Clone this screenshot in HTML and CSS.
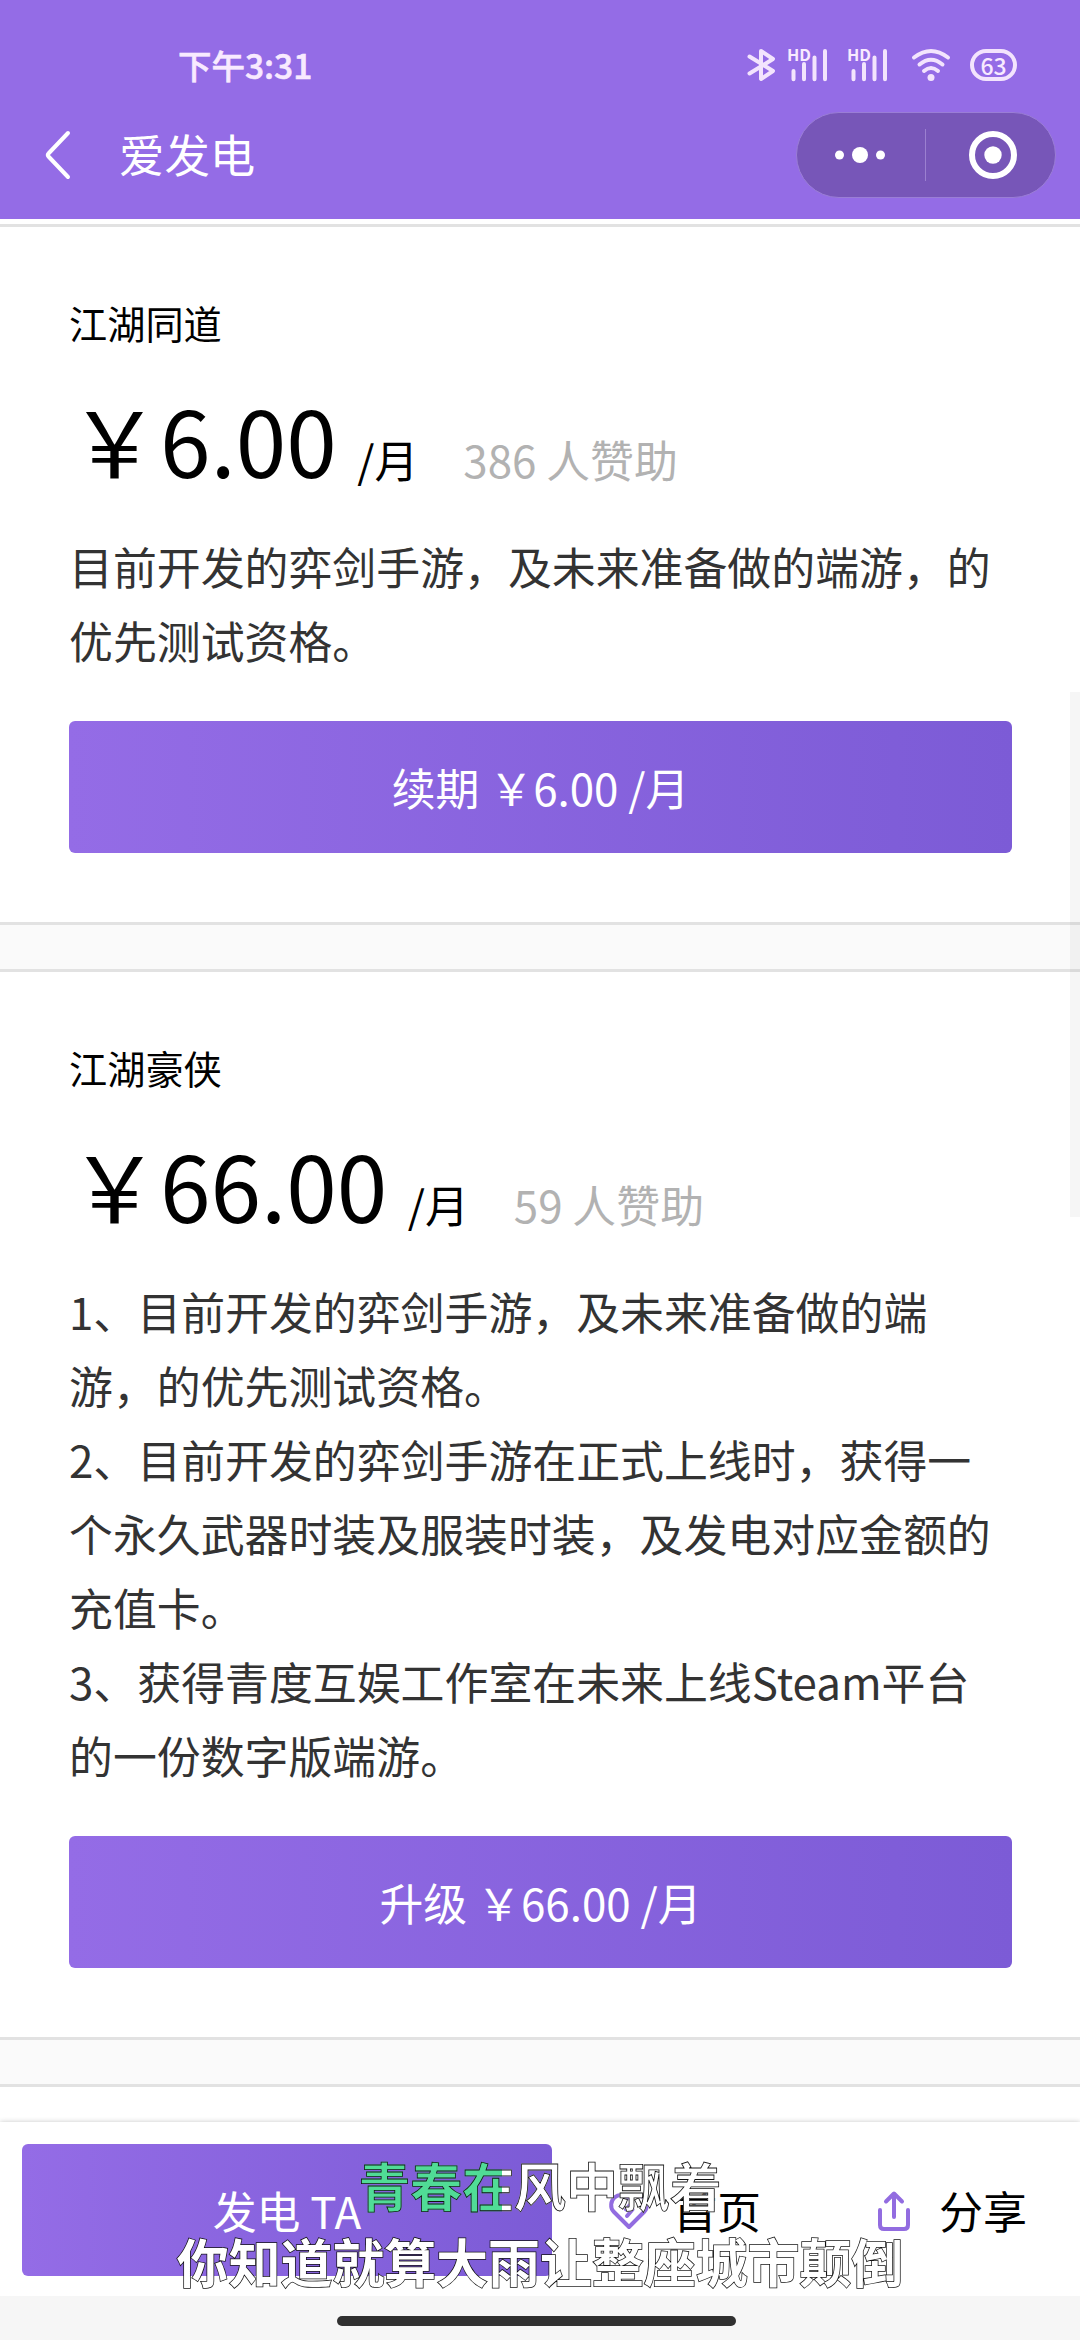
FILE: index.html
```html
<!DOCTYPE html>
<html lang="zh-CN">
<head>
<meta charset="utf-8">
<title>爱发电</title>
<link rel="stylesheet" href="styles.css">
</head>
<body>
<div class="screen">
  <header class="top">
    <div class="status">
      <span class="clock">下午3:31</span>
      <div class="status-icons">
        <svg class="i-bt" width="27" height="32" viewBox="0 0 27 32"><path d="M1.5 7.5 25 22 13 30V2L25 10 1.5 24.5"/></svg>
        <svg class="i-sig" width="41" height="32" viewBox="0 0 41 32"><path d="M6.5 22v8.200M17 15v15.200M27.500 8.500v21.700M38 2v28.200"/><text x="0" y="12" textLength="24" lengthAdjust="spacingAndGlyphs">HD</text></svg>
        <svg class="i-sig i-sig2" width="41" height="32" viewBox="0 0 41 32"><path d="M6.500 22v8.200M17 15v15.200M27.500 8.500v21.700M38 2v28.200"/><text x="0" y="12" textLength="24" lengthAdjust="spacingAndGlyphs">HD</text></svg>
        <svg class="i-wifi" width="38" height="32" viewBox="0 0 38 32"><path d="M2 8.500Q19-4.500 36 8.500M7.500 15.500Q19 6 30.500 15.500M12 22Q19 16 26 22"/><circle cx="19" cy="28.500" r="3.500"/></svg>
        <span class="battery">63</span>
      </div>
    </div>
    <div class="nav">
      <svg class="back" width="26" height="48" viewBox="0 0 26 48"><path d="M22 2 2.500 22.500Q1 24 2.500 25.500L22 46"/></svg>
      <h1 class="nav-title">爱发电</h1>
      <div class="capsule">
        <svg class="dots" width="52" height="18" viewBox="0 0 52 18"><circle cx="5.500" cy="9" r="4.500"/><circle cx="26" cy="9" r="8"/><circle cx="46.500" cy="9" r="4.500"/></svg>
        <span class="split"></span>
        <svg class="target" width="48" height="48" viewBox="0 0 48 48"><circle class="ring" cx="24" cy="24" r="21"/><circle cx="24" cy="24" r="8.700"/></svg>
      </div>
    </div>
  </header>

  <main class="plans">
    <section class="plan">
      <h2 class="plan-name">江湖同道</h2>
      <p class="price">￥6.00 <span class="unit">/月</span><span class="count">386 人赞助</span></p>
      <p class="desc">目前开发的弈剑手游，及未来准备做的端游，的优先测试资格。</p>
      <button class="btn">续期 ￥6.00 /月</button>
    </section>
    <section class="plan">
      <h2 class="plan-name">江湖豪侠</h2>
      <p class="price">￥66.00 <span class="unit">/月</span><span class="count">59 人赞助</span></p>
      <p class="desc">1、目前开发的弈剑手游，及未来准备做的端游，的优先测试资格。<br>2、目前开发的弈剑手游在正式上线时，获得一个永久武器时装及服装时装，及发电对应金额的充值卡。<br>3、获得青度互娱工作室在未来上线Steam平台的一份数字版端游。</p>
      <button class="btn">升级 ￥66.00 /月</button>
    </section>
    <section class="plan"></section>
  </main>

  <footer class="bar">
    <button class="btn btn-power">发电 TA</button>
    <a class="tab">
      <svg width="40" height="38" viewBox="0 0 40 38"><path d="M20 35 4.500 19.500C1 15.500 1.500 9 5.500 5.500C9.500 2 15.500 2 20 6.500C24.500 2 30.500 2 34.500 5.500C38.500 9 39 15.500 35.500 19.500ZM22.500 11 17 17.500H23.500L18 24"/></svg>
      <span>首页</span>
    </a>
    <a class="tab">
      <svg width="32" height="40" viewBox="0 0 32 40"><path d="M2 19V34Q2 38 6 38H26Q30 38 30 34V19M16 26V3M8 10.500 16 2.500 24 10.500"/></svg>
      <span>分享</span>
    </a>
  </footer>
  <div class="gesture"><span class="pill"></span></div>

  <div class="scrollbar"></div>
  <div class="lyrics">
    <p class="lyric lyric-now">青春在风中飘着</p>
    <p class="lyric">你知道就算大雨让整座城市颠倒</p>
  </div>
</div>
</body>
</html>
```
FILE: styles.css
```css
* { box-sizing: border-box; margin: 0; padding: 0; }
body {
  font-family: "Noto Sans CJK SC", sans-serif;
  background: #fff;
  color: #000;
}
svg { display: block; flex: none; fill: none; overflow: visible; stroke-linecap: round; stroke-linejoin: round; }
.screen {
  position: relative;
  width: 1080px;
  height: 2340px;
  overflow: hidden;
  display: flex;
  flex-direction: column;
}

.top { flex: none; height: 219px; background: #946ce6; color: #fff; }
.status {
  height: 112px;
  padding: 20px 63px 0 178px;
  display: flex;
  align-items: center;
  justify-content: space-between;
  color: #f8eaff;
}
.clock { font-size: 33.500px; font-weight: 500; line-height: 40px; margin-top: -3px; -webkit-text-stroke: .600px #f8eaff; }
.status-icons { display: flex; align-items: center; margin-top: -2px; stroke: #f3e4fd; stroke-width: 4px; }
.i-sig { margin-left: 12px; }
.i-sig2 { margin-left: 19px; }
.i-sig text { font-size: 16px; font-weight: 700; fill: #f8eaff; stroke: none; }
.i-wifi { margin-left: 24px; }
.i-wifi circle { fill: #f3e4fd; stroke: none; }
.battery {
  margin-left: 20px;
  width: 47px;
  height: 32px;
  border: 4px solid #f3e4fd;
  border-radius: 16px;
  font-size: 23px;
  font-weight: 500;
  line-height: 24px;
  text-align: center;
}
.nav { display: flex; align-items: center; height: 86px; padding: 0 24px 0 46px; }
.back { stroke: #fff; stroke-width: 4px; }
.nav-title { margin-left: 47px; margin-top: -4px; font-size: 45.400px; font-weight: 400; line-height: 60px; }
.capsule {
  margin-left: auto;
  width: 260px;
  height: 86px;
  padding: 0 38px 0 37px;
  display: flex;
  align-items: center;
  background: #7756b8;
  border: 1px solid #9a7dd6;
  border-radius: 43px;
}
.dots, .target { fill: #fff; }
.split { width: 1px; height: 52px; margin-left: 39px; background: #9b80d0; }
.target { margin-left: 43px; }
.ring { fill: none; stroke: #fff; stroke-width: 6px; }

.plans { flex: 1; min-height: 0; padding-top: 5px; overflow: hidden; }
.plan {
  padding: 69px 68px 69px 69px;
  border-top: 3px solid #e2e2e2;
  border-bottom: 3px solid #e2e2e2;
  background: #fff;
}
.plan + .plan { margin-top: 44px; box-shadow: 0 -44px 0 #fafafa; }
.plan-name { font-size: 38.200px; font-weight: 400; line-height: 54px; }
.price { margin-top: 38px; font-size: 91px; line-height: 100px; height: 100px; white-space: nowrap; }
.unit, .count { font-size: 43.900px; }
.count { margin-left: 45px; color: #b2b2b2; }
.desc { margin-top: 41px; font-size: 43.900px; line-height: 74px; color: #333; }
.btn {
  display: block;
  width: 100%;
  height: 132px;
  margin-top: 44px;
  border: 0;
  border-radius: 6px;
  background: linear-gradient(90deg, #946ce6, #7c5bd6);
  color: #fff;
  font: 400 43.900px/132px "Noto Sans CJK SC", sans-serif;
  text-align: center;
}

.bar {
  position: relative;
  flex: none;
  height: 174px;
  padding: 0 53px 0 22px;
  display: flex;
  align-items: center;
  background: #fff;
  box-shadow: 0 0 5px rgba(0, 0, 0, .22);
}
.btn-power { width: 530px; margin: 2px 0 0; }
.tab { display: flex; align-items: center; margin-top: 2px; font-size: 44px; line-height: 60px; }
.tab svg { stroke: #926ce0; stroke-width: 4px; margin-top: 2px; }
.tab:nth-child(2) { margin-left: 57px; }
.tab:nth-child(2) span { margin-left: 24px; }
.tab:nth-child(3) { margin-left: auto; }
.tab:nth-child(3) span { margin-left: 29px; }

.gesture {
  position: relative;
  flex: none;
  height: 44px;
  padding-top: 20px;
  background: #f6f6f6;
}
.pill { display: block; width: 399px; height: 10px; margin-left: 337px; border-radius: 5px; background: #303030; }

.scrollbar {
  position: absolute;
  right: 0;
  top: 692px;
  width: 10px;
  height: 525px;
  background: rgba(0, 0, 0, .035);
}
.lyrics { position: absolute; left: 0; right: 0; top: 2147px; text-align: center; }
.lyric {
  width: max-content;
  margin: 0 auto;
  font-size: 51.900px;
  font-weight: 700;
  line-height: 76px;
  color: #fff;
  paint-order: stroke fill;
  -webkit-text-stroke: 1.500px #111;
}
.lyric-now {
  background: linear-gradient(90deg, #50dc96 144px, #fff 144px);
  -webkit-background-clip: text;
  background-clip: text;
  -webkit-text-fill-color: transparent;
  -webkit-text-stroke: .800px #111;
}
```
